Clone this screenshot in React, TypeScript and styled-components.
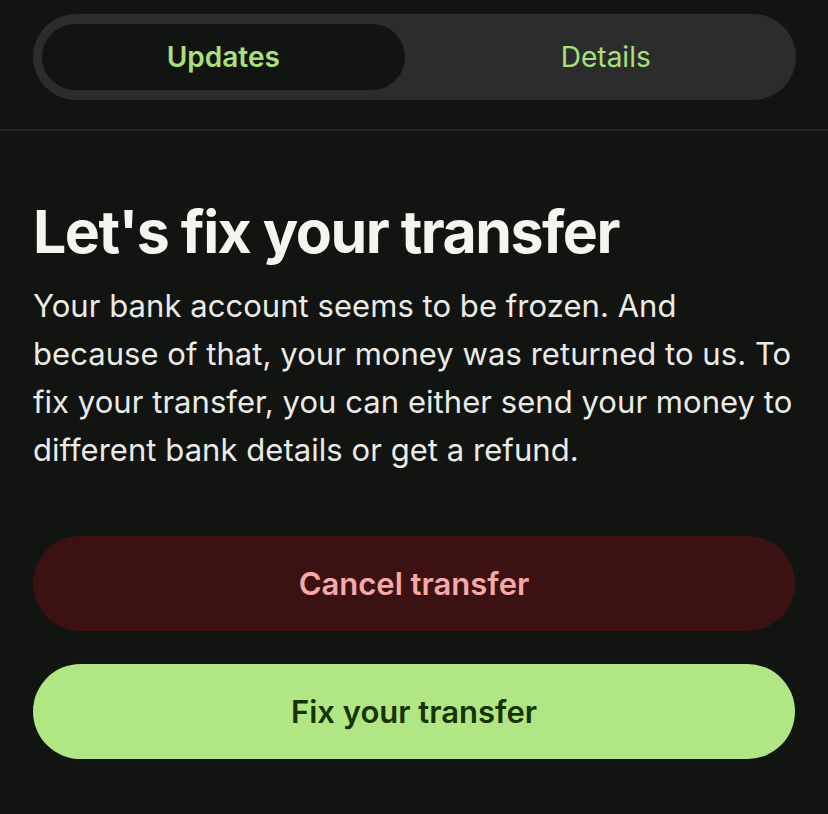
import styled, { createGlobalStyle } from 'styled-components';

const GlobalStyle = createGlobalStyle`
  html, body {
    margin: 0;
    padding: 0;
    background: #121412;
  }
  body {
    font-family: Inter, "Noto Sans", sans-serif;
    -webkit-font-smoothing: antialiased;
  }
`;

const Page = styled.div`
  width: 828px;
  min-height: 814px;
  background: #121412;
  color: #f2f2ee;
`;

const TabsHeader = styled.div`
  padding: 14px 32px 29px 33px;
  border-bottom: 2px solid #232523;
`;

const TabBar = styled.div`
  display: grid;
  grid-template-columns: 1fr 1fr;
  height: 86px;
  box-sizing: border-box;
  padding: 10px 9px;
  border-radius: 43px;
  background: #2b2d2c;
`;

const Tab = styled.button<{ $active?: boolean }>`
  display: flex;
  align-items: center;
  justify-content: center;
  border: 0;
  margin: 0 ${p => (p.$active ? '10px' : '0')} 0 0;
  padding: 0 0 0 ${p => (p.$active ? '0' : '10px')};
  border-radius: 33px;
  background: ${p => (p.$active ? '#121412' : 'transparent')};
  color: #a9e07c;
  font-family: Inter, sans-serif;
  font-size: 28px;
  font-weight: ${p => (p.$active ? 600 : 400)};
  cursor: pointer;
`;

const Content = styled.main`
  padding: 64px 33px 0;
`;

const Title = styled.h1`
  margin: 0;
  font-size: 59px;
  line-height: 74px;
  font-weight: 700;
  letter-spacing: -1.5px;
  color: #f4f4f0;
`;

const Body = styled.p`
  margin: 13px 0 0;
  font-size: 31px;
  line-height: 48px;
  font-weight: 400;
  letter-spacing: 0.05px;
  color: #ebebe6;
  white-space: nowrap;
`;

const Actions = styled.div`
  display: flex;
  flex-direction: column;
  gap: 33px;
  margin-top: 62px;
`;

const ActionButton = styled.button<{ $variant: 'danger' | 'primary' }>`
  height: 95px;
  border: 0;
  border-radius: 48px;
  font-family: Inter, sans-serif;
  font-size: 31px;
  font-weight: 600;
  cursor: pointer;
  background: ${p => (p.$variant === 'danger' ? '#3c1111' : '#b0e683')};
  color: ${p => (p.$variant === 'danger' ? '#f6a9a7' : '#173300')};
`;

export default function App() {
  return (
    <Page>
      <GlobalStyle />
      <TabsHeader>
        <TabBar>
          <Tab $active>Updates</Tab>
          <Tab>Details</Tab>
        </TabBar>
      </TabsHeader>
      <Content>
        <Title>Let's fix your transfer</Title>
        <Body>
          Your bank account seems to be frozen. And
          <br />
          because of that, your money was returned to us. To
          <br />
          fix your transfer, you can either send your money to
          <br />
          different bank details or get a refund.
        </Body>
        <Actions>
          <ActionButton $variant="danger">Cancel transfer</ActionButton>
          <ActionButton $variant="primary">Fix your transfer</ActionButton>
        </Actions>
      </Content>
    </Page>
  );
}
